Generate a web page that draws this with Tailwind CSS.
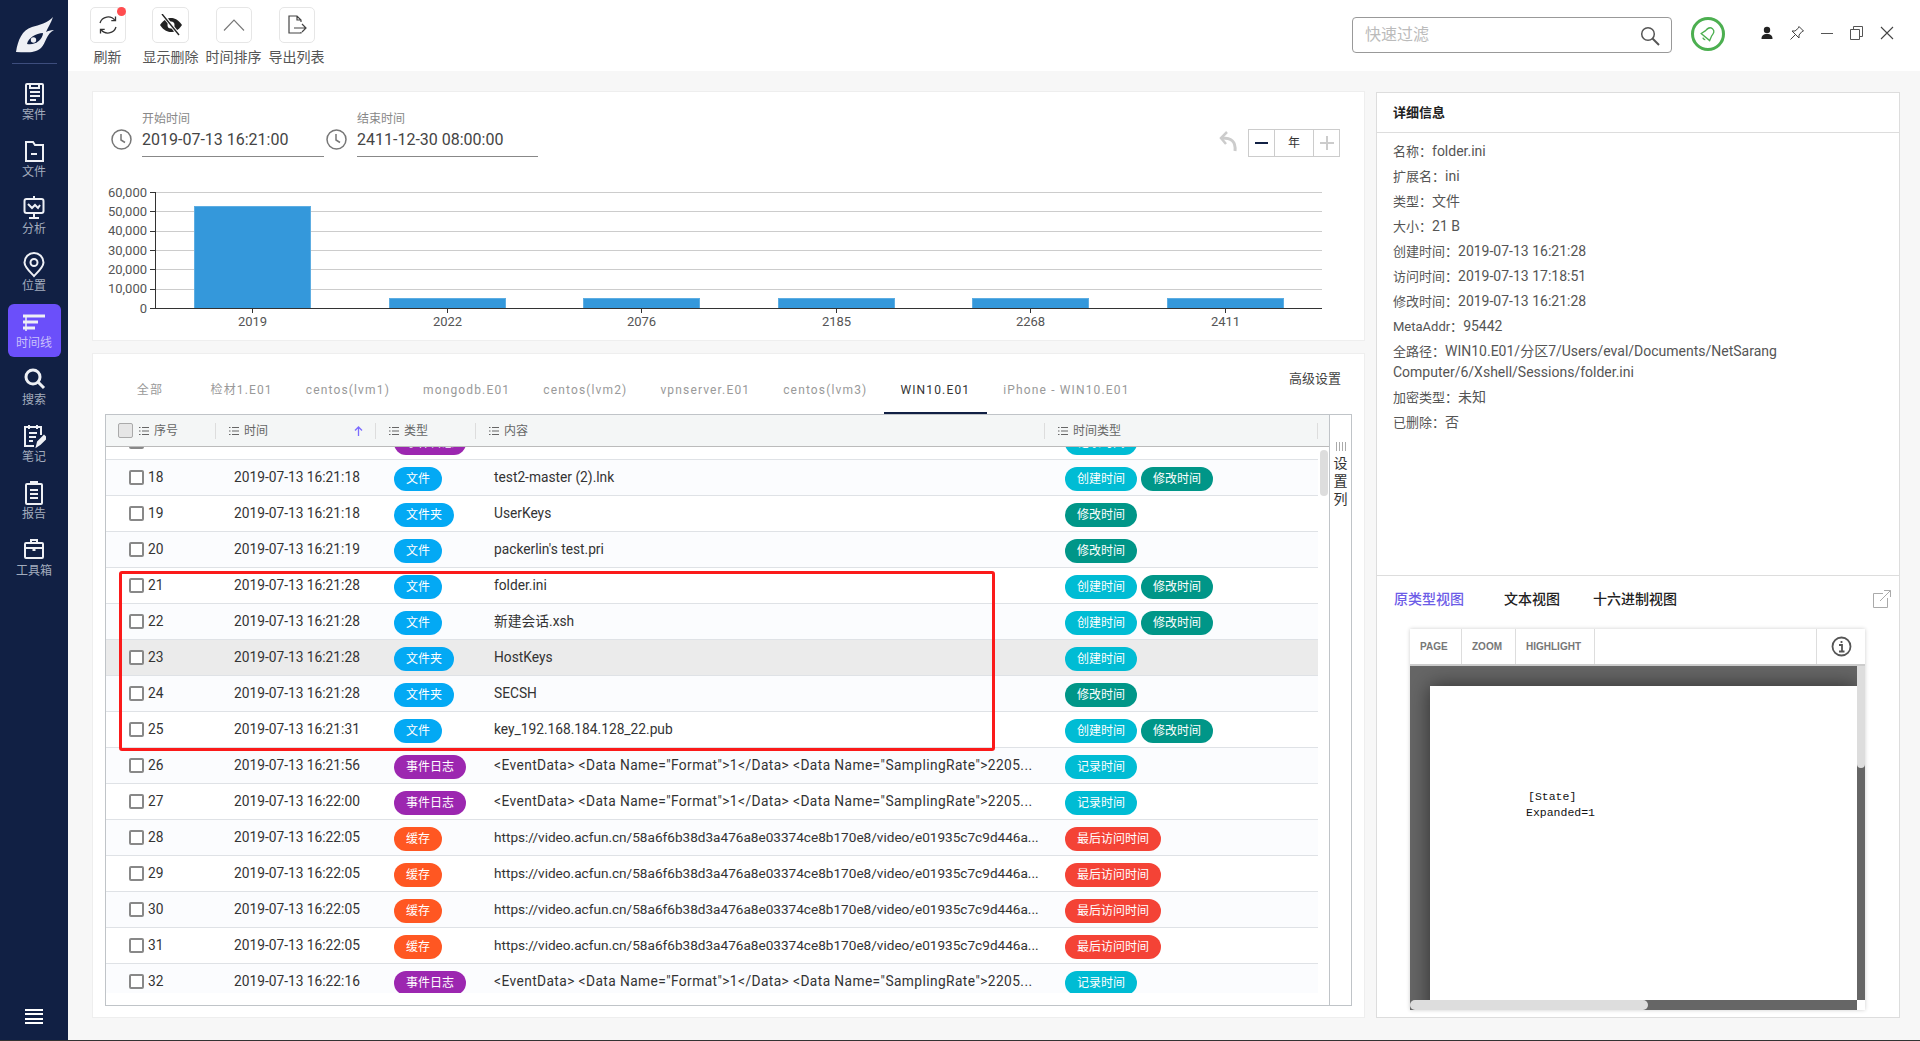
<!DOCTYPE html>
<html lang="zh">
<head>
    <meta charset="utf-8">
    <title>时间线</title>
    <script src="https://cdn.jsdelivr.net/npm/@tailwindcss/browser@4"></script>
</head>
<body class="[font-family:Roboto,'Noto_Sans_CJK_SC',sans-serif] bg-[#f7f7f7] text-[#333] overflow-hidden">
<div class="relative w-[1920px] h-[1041px] flex flex-col">
<div class="flex h-[1040px]">

    <!-- side bar -->
    <aside class="w-[68px] shrink-0 bg-[#112044] flex flex-col items-center text-[#a3acbd] text-[12px] leading-[14px]">
        <div class="h-[76px] w-full flex flex-col items-center">
            <svg class="mt-[16px] ml-[1px]" width="40" height="37" viewBox="0 0 40 37"><path d="M38 1C33 7 24 9 17 11C7 14 3 24 1 36C9 36 19 38 26 32C31 27 31 18 39 14C35 14 33 15 31 16C33 11 36 7 38 1Z" fill="#eef0f5"/><path d="M12 28C13 22 21 17 28 17C28 23 20 30 12 28Z" fill="#112044"/><circle cx="18.500" cy="24" r="2.700" fill="#eef0f5"/></svg>
            <div class="w-[45px] h-px bg-[#3d4d7d] mt-[10px]"></div>
        </div>
        <div class="w-[53px] h-[53px] mb-[4px] flex flex-col items-center pt-[5px] shrink-0">
            <svg width="24" height="26" viewBox="0 0 24 26" fill="none" stroke="#eef0f5" stroke-width="2"><rect x="4" y="3" width="17" height="20" rx="1"/><path d="M8 3v4h9V3M8 11h10M8 15h10M8 19h6"/></svg>
            <span class="mt-[1px]">案件</span>
        </div>
        <div class="w-[53px] h-[53px] mb-[4px] flex flex-col items-center pt-[5px] shrink-0">
            <svg width="24" height="26" viewBox="0 0 24 26" fill="none" stroke="#eef0f5" stroke-width="2"><path d="M4 23V4h7l2 3h8v16zM9 16h6"/></svg>
            <span class="mt-[1px]">文件</span>
        </div>
        <div class="w-[53px] h-[53px] mb-[4px] flex flex-col items-center pt-[5px] shrink-0">
            <svg width="24" height="26" viewBox="0 0 24 26" fill="none" stroke="#eef0f5" stroke-width="2"><path d="M12 1v3"/><rect x="2.500" y="4" width="19" height="14" rx="2"/><path d="M6 9l4 4 3-3 3 3 2-3M12 18v4M7 23h10"/></svg>
            <span class="mt-[1px]">分析</span>
        </div>
        <div class="w-[53px] h-[53px] mb-[4px] flex flex-col items-center pt-[5px] shrink-0">
            <svg width="24" height="26" viewBox="0 0 24 26" fill="none" stroke="#eef0f5" stroke-width="2"><path d="M12 24C7 19 2.500 15 2.500 10.500a9.500 9.500 0 0 1 19 0C21.500 15 17 19 12 24Z"/><circle cx="12" cy="10.500" r="3.500"/></svg>
            <span class="mt-[1px]">位置</span>
        </div>
        <div class="w-[53px] h-[53px] mb-[4px] flex flex-col items-center pt-[5px] shrink-0 rounded-md bg-[#6b4ffa] text-[#c9c0fb]">
            <svg width="24" height="26" viewBox="0 0 24 26" fill="none" stroke="#eef0f5" stroke-width="2"><path d="M4 6v16" stroke-width="1.500"/><path d="M1 7h22M1 13h15M1 19h12" stroke-width="3"/></svg>
            <span class="mt-[1px]">时间线</span>
        </div>
        <div class="w-[53px] h-[53px] mb-[4px] flex flex-col items-center pt-[5px] shrink-0">
            <svg width="24" height="26" viewBox="0 0 24 26" fill="none" stroke="#eef0f5" stroke-width="3"><circle cx="11" cy="11" r="7"/><path d="M16 16l6 6"/></svg>
            <span class="mt-[1px]">搜索</span>
        </div>
        <div class="w-[53px] h-[53px] mb-[4px] flex flex-col items-center pt-[5px] shrink-0">
            <svg width="24" height="26" viewBox="0 0 24 26" fill="none" stroke="#eef0f5" stroke-width="2"><path d="M19 12V4H3v19h9M7 2v4M15 2v4M7 10h8M7 14h7M7 18h4"/><path d="M15 23l1-4 6-6 2 2-6 6z" fill="#eef0f5"/></svg>
            <span class="mt-[1px]">笔记</span>
        </div>
        <div class="w-[53px] h-[53px] mb-[4px] flex flex-col items-center pt-[5px] shrink-0">
            <svg width="24" height="26" viewBox="0 0 24 26" fill="none" stroke="#eef0f5" stroke-width="2"><rect x="4" y="4" width="16" height="20" rx="1"/><path d="M9 4V2h6v2M8 10h8M8 14h8M8 18h8"/></svg>
            <span class="mt-[1px]">报告</span>
        </div>
        <div class="w-[53px] h-[53px] mb-[4px] flex flex-col items-center pt-[5px] shrink-0">
            <svg width="24" height="26" viewBox="0 0 24 26" fill="none" stroke="#eef0f5" stroke-width="2"><rect x="3" y="6" width="18" height="15" rx="1"/><path d="M9 6V3h6v3M3 11h18"/><path d="M12 10v4" stroke-width="3"/></svg>
            <span class="mt-[1px]">工具箱</span>
        </div>
        <div class="mt-auto mb-[16px] w-[18px] flex flex-col gap-[2.500px]">
            <div class="h-[2px] bg-white"></div>
            <div class="h-[2px] bg-white"></div>
            <div class="h-[2px] bg-white"></div>
            <div class="h-[2px] bg-white"></div>
        </div>
    </aside>

    <!-- main content -->
    <div class="flex-1 flex flex-col min-w-0">
        <header class="h-[71px] bg-white flex items-start shrink-0">
            <div class="flex ml-[8px] pt-[7px]">
                <div class="w-[63px] flex flex-col items-center">
                    <div class="relative w-[36px] h-[36px] border border-[#e6e6e6] rounded-[5px] flex items-center justify-center">
                        <svg width="22" height="22" viewBox="0 0 22 22" fill="none" stroke="#333" stroke-width="1.300"><path d="M3 9a8.500 8.500 0 0 1 15-2.500M19 13a8.500 8.500 0 0 1-15 2.500"/><path d="M18.500 2.500v4.200h-4.200M3.500 19.500v-4.200h4.200"/></svg>
                        <span class="absolute -top-[1px] -right-[1px] w-[9px] h-[9px] rounded-full bg-[#ff4d4f]"></span>
                    </div>
                    <span class="mt-[6px] text-[14px] leading-[16px] text-[#555]">刷新</span>
                </div>
                <div class="w-[63px] flex flex-col items-center">
                    <div class="w-[37px] h-[36px] border border-[#e6e6e6] rounded-[5px] flex items-center justify-center">
                        <svg width="24" height="22" viewBox="0 0 24 22"><path d="M1 11C5 5 9 4 12 4s7 1 11 7c-4 6-8 7-11 7s-7-1-11-7Z" fill="#222"/><circle cx="12" cy="11" r="3.500" fill="#fff"/><path d="M4 1l16 20" stroke="#fff" stroke-width="3.500"/><path d="M3 0l17 21" stroke="#222" stroke-width="1.400"/></svg>
                    </div>
                    <span class="mt-[6px] text-[14px] leading-[16px] text-[#555]">显示删除</span>
                </div>
                <div class="w-[63px] flex flex-col items-center">
                    <div class="w-[36px] h-[36px] border border-[#e6e6e6] rounded-[5px] flex items-center justify-center">
                        <svg width="22" height="14" viewBox="0 0 22 14" fill="none" stroke="#777" stroke-width="1.100"><path d="M1 12.500L11 2l10 10.500"/></svg>
                    </div>
                    <span class="mt-[6px] text-[14px] leading-[16px] text-[#555]">时间排序</span>
                </div>
                <div class="w-[63px] flex flex-col items-center">
                    <div class="w-[36px] h-[36px] border border-[#e6e6e6] rounded-[5px] flex items-center justify-center">
                        <svg width="20" height="20" viewBox="0 0 20 20" fill="none" stroke="#444" stroke-width="1.200"><path d="M14 7V5L10 1H2v17h12v-1M10 1v4h4M7 13h12M15 9l4 4-4 4"/></svg>
                    </div>
                    <span class="mt-[6px] text-[14px] leading-[16px] text-[#555]">导出列表</span>
                </div>
            </div>
            <div class="ml-auto flex items-start pt-[17px] pr-[25px]">
                <div class="w-[320px] h-[36px] border border-[#999] rounded-[4px] flex items-center pl-[12px] pr-[11px]">
                    <span class="text-[16px] text-[#bbb]">快速过滤</span>
                    <svg class="ml-auto mt-[2px]" width="20" height="20" viewBox="0 0 20 20" fill="none" stroke="#555" stroke-width="1.500"><circle cx="8" cy="8" r="6.300"/><path d="M12.500 12.500l6.500 6.500" stroke-width="2"/></svg>
                </div>
                <div class="ml-[19px] w-[34px] h-[34px] rounded-full border-[3px] border-[#4caf50] flex items-center justify-center">
                    <svg width="18" height="18" viewBox="0 0 16 18" fill="none" stroke="#4caf50" stroke-width="1.300"><g transform="rotate(40 8 9)"><path d="M8 2C4.500 2 4 5 4 8L2.500 13H13.500L12 8C12 5 11.500 2 8 2Z"/><path d="M6.500 15a2 2 0 0 0 3 0"/></g></svg>
                </div>
                <div class="ml-[34px] mt-[8px] w-[16px]">
                    <svg width="16" height="16" viewBox="0 0 16 16" fill="#222"><circle cx="8" cy="5" r="3.200"/><path d="M2.500 14c0-3.500 1.800-5 5.500-5s5.500 1.500 5.500 5Z"/></svg>
                </div>
                <div class="ml-[14px] mt-[8px] w-[16px]">
                    <svg width="16" height="16" viewBox="0 0 16 16" fill="none" stroke="#444"><path d="M10 1.500L14.500 6L13 6.500L10 10L10 13L3 6L6 6L9.500 3ZM6 10L1.500 14.500"/></svg>
                </div>
                <div class="ml-[14px] mt-[8px] w-[16px]">
                    <svg width="16" height="16" viewBox="0 0 16 16" stroke="#555"><path d="M2 8.500h12"/></svg>
                </div>
                <div class="ml-[13px] mt-[8px] w-[16px]">
                    <svg width="16" height="16" viewBox="0 0 16 16" fill="none" stroke="#555"><path d="M5.500 4.500V1.500h9v10h-3M2.500 4.500h9v10h-9z"/></svg>
                </div>
                <div class="ml-[15px] mt-[8px] w-[16px]">
                    <svg width="16" height="16" viewBox="0 0 16 16" stroke="#444" stroke-width="1.100"><path d="M2 2l12 12M14 2L2 14"/></svg>
                </div>
            </div>
        </header>

        <div class="flex-1 flex items-start pl-[24px] pt-[20px]">
            <!-- left column -->
            <div class="w-[1273px] shrink-0 flex flex-col gap-[12px]">
                <!-- chart card -->
                <section class="h-[250px] bg-white border border-[#eee]">
                    <div class="flex items-start pt-[19px] pl-[18px] pr-[24px]">
                        <svg class="mt-[18px]" width="21" height="21" viewBox="0 0 21 21" fill="none" stroke="#777" stroke-width="1.500"><circle cx="10.500" cy="10.500" r="9.500"/><path d="M10 5v6l4 2.500"/></svg>
                        <div class="ml-[10px] w-[182px] border-b border-[#888] pb-[6px]">
                            <div class="text-[12px] leading-[16px] text-[#888]">开始时间</div>
                            <div class="mt-[3px] text-[16px] leading-[20px] text-[#444]">2019-07-13 16:21:00</div>
                        </div>
                        <svg class="mt-[18px] ml-[2px]" width="21" height="21" viewBox="0 0 21 21" fill="none" stroke="#777" stroke-width="1.500"><circle cx="10.500" cy="10.500" r="9.500"/><path d="M10 5v6l4 2.500"/></svg>
                        <div class="ml-[10px] w-[181px] border-b border-[#888] pb-[6px]">
                            <div class="text-[12px] leading-[16px] text-[#888]">结束时间</div>
                            <div class="mt-[3px] text-[16px] leading-[20px] text-[#444]">2411-12-30 08:00:00</div>
                        </div>
                        <div class="ml-auto mt-[18px] flex items-center h-[28px]">
                            <svg class="mr-[9px] -mt-[4px]" width="20" height="22" viewBox="0 0 20 22" fill="none" stroke="#ccc"><path d="M8 2L2 8l5 6" stroke-width="2.500"/><path d="M3 8C12 8 17 11 16 21" stroke-width="3"/></svg>
                            <div class="flex h-[28px] border border-[#ccc]">
                                <div class="w-[25px] flex items-center justify-center"><div class="w-[13px] h-[2px] bg-[#112044]"></div></div>
                                <div class="w-[40px] border-x border-[#ccc] flex items-center justify-center text-[12px] text-[#333]">年</div>
                                <div class="w-[25px] flex items-center justify-center text-[#ccc]">
                                    <svg width="14" height="14" viewBox="0 0 14 14" stroke="#ccc" stroke-width="2"><path d="M7 0v14M0 7h14"/></svg>
                                </div>
                            </div>
                        </div>
                    </div>
                    <svg class="mt-[3px] block" width="1271" height="180" viewBox="93 160 1271 180" font-size="12" fill="#555" font-family="Roboto">
                        <g stroke="#ccc"><path d="M155 192.500H1322M155 211.500H1322M155 231.500H1322M155 250.500H1322M155 269.500H1322M155 289.500H1322"/></g>
                        <g fill="#3498db" stroke="#5dade2">
                            <rect x="194.500" y="206.500" width="116" height="102"/>
                            <rect x="389.500" y="298.500" width="116" height="10"/>
                            <rect x="583.500" y="298.500" width="116" height="10"/>
                            <rect x="778.500" y="298.500" width="116" height="10"/>
                            <rect x="972.500" y="298.500" width="116" height="10"/>
                            <rect x="1167.500" y="298.500" width="116" height="10"/>
                        </g>
                        <path d="M155.500 192V308.500M150 192.500h6M150 211.500h6M150 231.500h6M150 250.500h6M150 269.500h6M150 289.500h6M150 308.500H1322M252.500 308v5M447.500 308v5M641.500 308v5M836.500 308v5M1030.500 308v5M1225.500 308v5" stroke="#333" fill="none"/>
                        <g text-anchor="end" font-size="13">
                            <text x="147" y="196.500">60,000</text><text x="147" y="215.500">50,000</text><text x="147" y="235">40,000</text><text x="147" y="254.500">30,000</text><text x="147" y="273.500">20,000</text><text x="147" y="293">10,000</text><text x="147" y="312.500">0</text>
                        </g>
                        <g text-anchor="middle" font-size="13">
                            <text x="252.500" y="326">2019</text><text x="447.500" y="326">2022</text><text x="641.500" y="326">2076</text><text x="836.500" y="326">2185</text><text x="1030.500" y="326">2268</text><text x="1225.500" y="326">2411</text>
                        </g>
                    </svg>
                </section>

                <!-- table card -->
                <section class="h-[665px] bg-white border border-[#eee]">
                    <div class="flex h-[60px] pt-[14px] pl-[13px] text-[12px] tracking-[1.150px] text-[#999]">
                        <div class="w-[88px] h-[46px] border-b-2 border-transparent flex items-center justify-center">全部</div>
                        <div class="px-[16.500px] h-[46px] border-b-2 border-transparent flex items-center">检材1.E01</div>
                        <div class="px-[16.500px] h-[46px] border-b-2 border-transparent flex items-center">centos(lvm1)</div>
                        <div class="px-[16.500px] h-[46px] border-b-2 border-transparent flex items-center">mongodb.E01</div>
                        <div class="px-[16.500px] h-[46px] border-b-2 border-transparent flex items-center">centos(lvm2)</div>
                        <div class="px-[16.500px] h-[46px] border-b-2 border-transparent flex items-center">vpnserver.E01</div>
                        <div class="px-[16.500px] h-[46px] border-b-2 border-transparent flex items-center">centos(lvm3)</div>
                        <div class="px-[16.500px] h-[46px] border-b-2 border-[#112044] text-[#333] flex items-center">WIN10.E01</div>
                        <div class="px-[16.500px] h-[46px] border-b-2 border-transparent flex items-center">iPhone - WIN10.E01</div>
                        <div class="ml-auto mr-[23px] mt-[2px] h-[18px] text-[13px] leading-[18px] tracking-normal text-[#444]">高级设置</div>
                    </div>

                    <div class="ml-[12px] w-[1247px] h-[592px] border border-[#c0c4c8] flex">
                        <div class="w-[1224px] flex flex-col">
                            <div class="h-[32px] shrink-0 bg-[#f4f6f6] border-b border-[#bbb] flex items-center text-[12px] leading-[16px] text-[#666]">
                                <div class="w-[110px] h-[16px] pl-[12px] border-r border-[#ddd] flex items-center">
                                    <span class="w-[15px] h-[15px] rounded-[2px] bg-[#e6e6e6] border border-[#aaa]"></span>
                                    <svg class="ml-[6px]" width="10" height="8" viewBox="0 0 10 8" stroke="#666"><path d="M0 .5h1.500M3 .5h7M0 4h1.500M3 4h7M0 7.500h1.500M3 7.500h7"/></svg>
                                    <span class="ml-[5px]">序号</span>
                                </div>
                                <div class="w-[160px] h-[16px] pl-[13px] pr-[12px] border-r border-[#ddd] flex items-center">
                                    <svg width="10" height="8" viewBox="0 0 10 8" stroke="#666"><path d="M0 .5h1.500M3 .5h7M0 4h1.500M3 4h7M0 7.500h1.500M3 7.500h7"/></svg>
                                    <span class="ml-[5px]">时间</span>
                                    <svg class="ml-auto" width="9" height="10" viewBox="0 0 9 10" fill="none" stroke="#7c6cff" stroke-width="1.300"><path d="M4.500 10V1M1 4.500l3.500-3.500 3.500 3.500"/></svg>
                                </div>
                                <div class="w-[100px] h-[16px] pl-[13px] border-r border-[#ddd] flex items-center">
                                    <svg width="10" height="8" viewBox="0 0 10 8" stroke="#666"><path d="M0 .5h1.500M3 .5h7M0 4h1.500M3 4h7M0 7.500h1.500M3 7.500h7"/></svg>
                                    <span class="ml-[5px]">类型</span>
                                </div>
                                <div class="w-[569px] h-[16px] pl-[13px] border-r border-[#ddd] flex items-center">
                                    <svg width="10" height="8" viewBox="0 0 10 8" stroke="#666"><path d="M0 .5h1.500M3 .5h7M0 4h1.500M3 4h7M0 7.500h1.500M3 7.500h7"/></svg>
                                    <span class="ml-[5px]">内容</span>
                                </div>
                                <div class="w-[273px] h-[16px] pl-[13px] border-r border-[#ddd] flex items-center">
                                    <svg width="10" height="8" viewBox="0 0 10 8" stroke="#666"><path d="M0 .5h1.500M3 .5h7M0 4h1.500M3 4h7M0 7.500h1.500M3 7.500h7"/></svg>
                                    <span class="ml-[5px]">时间类型</span>
                                </div>
                            </div>
                            <div class="flex">
                                <div id="rows" class="w-[1212px] h-[546px] overflow-hidden"></div>
                                <div class="pl-[2px] pt-[3px]"><div class="w-[8px] h-[46px] rounded-[4px] bg-[#ddd]"></div></div>
                            </div>
                        </div>
                        <div class="w-[22px] border-l border-[#c0c4c8] flex flex-col items-center pt-[27px] text-[14px] leading-[18px] text-[#333]">
                            <svg width="11" height="9" viewBox="0 0 11 9" stroke="#aaa"><path d="M1.500 0v9M4.500 0v9M7.500 0v9M10.500 0v9"/></svg>
                            <span class="mt-[3px]">设</span><span>置</span><span>列</span>
                        </div>
                    </div>
                </section>
            </div>

            <!-- detail panel -->
            <aside class="ml-[11px] w-[524px] h-[926px] mt-px bg-white border border-[#ddd] shrink-0 flex flex-col">
                <div class="h-[40px] shrink-0 border-b border-[#ddd] pl-[16px] flex items-center text-[13px] font-bold text-[#222]">详细信息</div>
                <div class="h-[443px] shrink-0 border-b border-[#ddd] pl-[16px] pt-[8px] text-[13px] leading-[21px] text-[#555]">
                    <div class="mb-[4px]">名称：<span class="text-[14px]">folder.ini</span></div>
                    <div class="mb-[4px]">扩展名：<span class="text-[14px]">ini</span></div>
                    <div class="mb-[4px]">类型：<span class="text-[14px]">文件</span></div>
                    <div class="mb-[4px]">大小：<span class="text-[14px]">21 B</span></div>
                    <div class="mb-[4px]">创建时间：<span class="text-[14px]">2019-07-13 16:21:28</span></div>
                    <div class="mb-[4px]">访问时间：<span class="text-[14px]">2019-07-13 17:18:51</span></div>
                    <div class="mb-[4px]">修改时间：<span class="text-[14px]">2019-07-13 16:21:28</span></div>
                    <div class="mb-[4px]">MetaAddr：<span class="text-[14px]">95442</span></div>
                    <div class="mb-[4px] w-[430px]">全路径：<span class="text-[14px]">WIN10.E01/分区7/Users/eval/Documents/NetSarang Computer/6/Xshell/Sessions/folder.ini</span></div>
                    <div class="mb-[4px]">加密类型：<span class="text-[14px]">未知</span></div>
                    <div class="mb-[4px]">已删除：<span class="text-[14px]">否</span></div>
                </div>
                <div class="h-[46px] shrink-0 flex items-center pl-[17px] text-[14px] font-medium text-[#222]">
                    <span class="text-[#6c5ce7]">原类型视图</span>
                    <span class="ml-[40px]">文本视图</span>
                    <span class="ml-[33px]">十六进制视图</span>
                    <svg class="ml-auto mr-[8px]" width="18" height="18" viewBox="0 0 18 18" fill="none" stroke="#aaa"><path d="M10 3.500H.5v14h14V8M7 11L17.500.5M11 .5h6.500V7"/></svg>
                </div>
                <!-- pdf viewer -->
                <div class="ml-[33px] mt-[7px] w-[455px] h-[381px] flex flex-col shadow-[0_0_4px_rgba(0,0,0,0.2)]">
                    <div class="h-[37px] shrink-0 bg-white border-b-2 border-[#ccc] flex font-['Liberation_Sans'] font-bold text-[10px] text-[#777]">
                        <div class="w-[52px] pl-[10px] border-r border-[#ddd] flex items-center">PAGE</div>
                        <div class="w-[54px] pl-[10px] border-r border-[#ddd] flex items-center">ZOOM</div>
                        <div class="w-[79px] pl-[10px] border-r border-[#ddd] flex items-center">HIGHLIGHT</div>
                        <div class="ml-auto w-[49px] border-l border-[#ddd] flex items-center justify-center">
                            <svg width="21" height="21" viewBox="0 0 21 21" fill="none" stroke="#555" stroke-width="1.800"><circle cx="10.500" cy="10.500" r="9"/><path d="M8 9h3v6M8 15.500h5.500M10.500 5v2"/></svg>
                        </div>
                    </div>
                    <div class="flex-1 bg-[#666] flex flex-col min-h-0">
                        <div class="flex-1 flex min-h-0">
                            <div class="w-[447px] pl-[20px] pt-[20px] overflow-hidden">
                                <div class="w-[427px] h-[400px] bg-white shadow-[0_0_20px_rgba(0,0,0,0.55)] pl-[96px] pt-[103px] font-['Liberation_Mono',monospace] text-[11.500px] leading-[16px] text-[#111]">
                                    <div class="pl-[2px]">[State]</div>
                                    <div>Expanded=1</div>
                                </div>
                            </div>
                            <div class="w-[8px] relative z-10 bg-[#666]"><div class="h-[102px] bg-[#ddd] rounded-b-[4px]"></div></div>
                        </div>
                        <div class="h-[10px] shrink-0 flex relative z-10 bg-[#666]">
                            <div class="w-[238px] bg-[#ddd] rounded-[5px]"></div>
                            <div class="ml-auto w-[8px] bg-white"></div>
                        </div>
                    </div>
                </div>
            </aside>
        </div>
    </div>
</div>
<div class="h-px bg-[#333]"></div>

<!-- red highlight over rows 21-25 -->
<div class="absolute left-[119px] top-[571px] w-[876px] h-[180px] border-[3px] border-[#fb1a1a] rounded-[3px] pointer-events-none"></div>
</div>

<script>
    const eventText = '<span class="tracking-[0.410px]">&lt;EventData&gt; &lt;Data Name="Format"&gt;1&lt;/Data&gt; &lt;Data Name="SamplingRate"&gt;2205...</span>';
    const urlText = '<span class="text-[13.600px]">https://video.acfun.cn/58a6f6b38d3a476a8e03374ce8b170e8/video/e01935c7c9d446a...</span>';

    const typePills = {
        file: '<span class="inline-flex items-center justify-center w-[48px] h-[24px] mt-[3px] rounded-full bg-[#03a9f4] text-white text-[12px]">文件</span>',
        dir: '<span class="inline-flex items-center justify-center w-[60px] h-[24px] mt-[3px] rounded-full bg-[#03a9f4] text-white text-[12px]">文件夹</span>',
        log: '<span class="inline-flex items-center justify-center w-[72px] h-[24px] mt-[3px] rounded-full bg-[#9c27b0] text-white text-[12px]">事件日志</span>',
        cache: '<span class="inline-flex items-center justify-center w-[48px] h-[24px] mt-[3px] rounded-full bg-[#ff5722] text-white text-[12px]">缓存</span>'
    };
    const timePills = {
        c: '<span class="inline-flex items-center justify-center w-[72px] h-[24px] mt-[3px] rounded-full bg-[#00bcd4] text-white text-[12px]">创建时间</span>',
        m: '<span class="inline-flex items-center justify-center w-[72px] h-[24px] mt-[3px] rounded-full bg-[#009688] text-white text-[12px]">修改时间</span>',
        r: '<span class="inline-flex items-center justify-center w-[72px] h-[24px] mt-[3px] rounded-full bg-[#00bcd4] text-white text-[12px]">记录时间</span>',
        a: '<span class="inline-flex items-center justify-center w-[96px] h-[24px] mt-[3px] rounded-full bg-[#f44336] text-white text-[12px]">最后访问时间</span>'
    };

    // no, time, type, content, time types
    const rows = [
        [17, '2019-07-13 16:21:18', 'log', '', 'r'],
        [18, '2019-07-13 16:21:18', 'file', 'test2-master (2).lnk', 'cm'],
        [19, '2019-07-13 16:21:18', 'dir', 'UserKeys', 'm'],
        [20, '2019-07-13 16:21:19', 'file', "packerlin's test.pri", 'm'],
        [21, '2019-07-13 16:21:28', 'file', 'folder.ini', 'cm'],
        [22, '2019-07-13 16:21:28', 'file', '新建会话.xsh', 'cm'],
        [23, '2019-07-13 16:21:28', 'dir', 'HostKeys', 'c'],
        [24, '2019-07-13 16:21:28', 'dir', 'SECSH', 'm'],
        [25, '2019-07-13 16:21:31', 'file', 'key_192.168.184.128_22.pub', 'cm'],
        [26, '2019-07-13 16:21:56', 'log', eventText, 'r'],
        [27, '2019-07-13 16:22:00', 'log', eventText, 'r'],
        [28, '2019-07-13 16:22:05', 'cache', urlText, 'a'],
        [29, '2019-07-13 16:22:05', 'cache', urlText, 'a'],
        [30, '2019-07-13 16:22:05', 'cache', urlText, 'a'],
        [31, '2019-07-13 16:22:05', 'cache', urlText, 'a'],
        [32, '2019-07-13 16:22:16', 'log', eventText, 'r']
    ];

    document.getElementById('rows').innerHTML = rows.map(([no, time, type, content, times]) => {
        const bg = no === 23 ? 'bg-[#ebebeb]' : (no % 2 === 0 ? 'bg-[#fbfcfe]' : 'bg-white');
        const first = no === 17 ? '-mt-[23px]' : '';
        const pills = times.split('').map(t => timePills[t]).join('');
        return `
            <div class="${bg} ${first} h-[36px] border-b border-[#dfe2e6] flex items-center text-[13.750px] text-[#333]">
                <div class="w-[110px] pl-[23px] flex items-center">
                    <span class="w-[15px] h-[15px] rounded-[2px] border-2 border-[#888] bg-white"></span>
                    <span class="ml-[4px]">${no}</span>
                </div>
                <div class="w-[160px] pl-[18px]">${time}</div>
                <div class="w-[100px] pl-[18px] flex">${typePills[type]}</div>
                <div class="w-[569px] pl-[18px] whitespace-nowrap overflow-hidden">${content}</div>
                <div class="w-[273px] pl-[20px] flex gap-[4px]">${pills}</div>
            </div>`;
    }).join('');
</script>
</body>
</html>
